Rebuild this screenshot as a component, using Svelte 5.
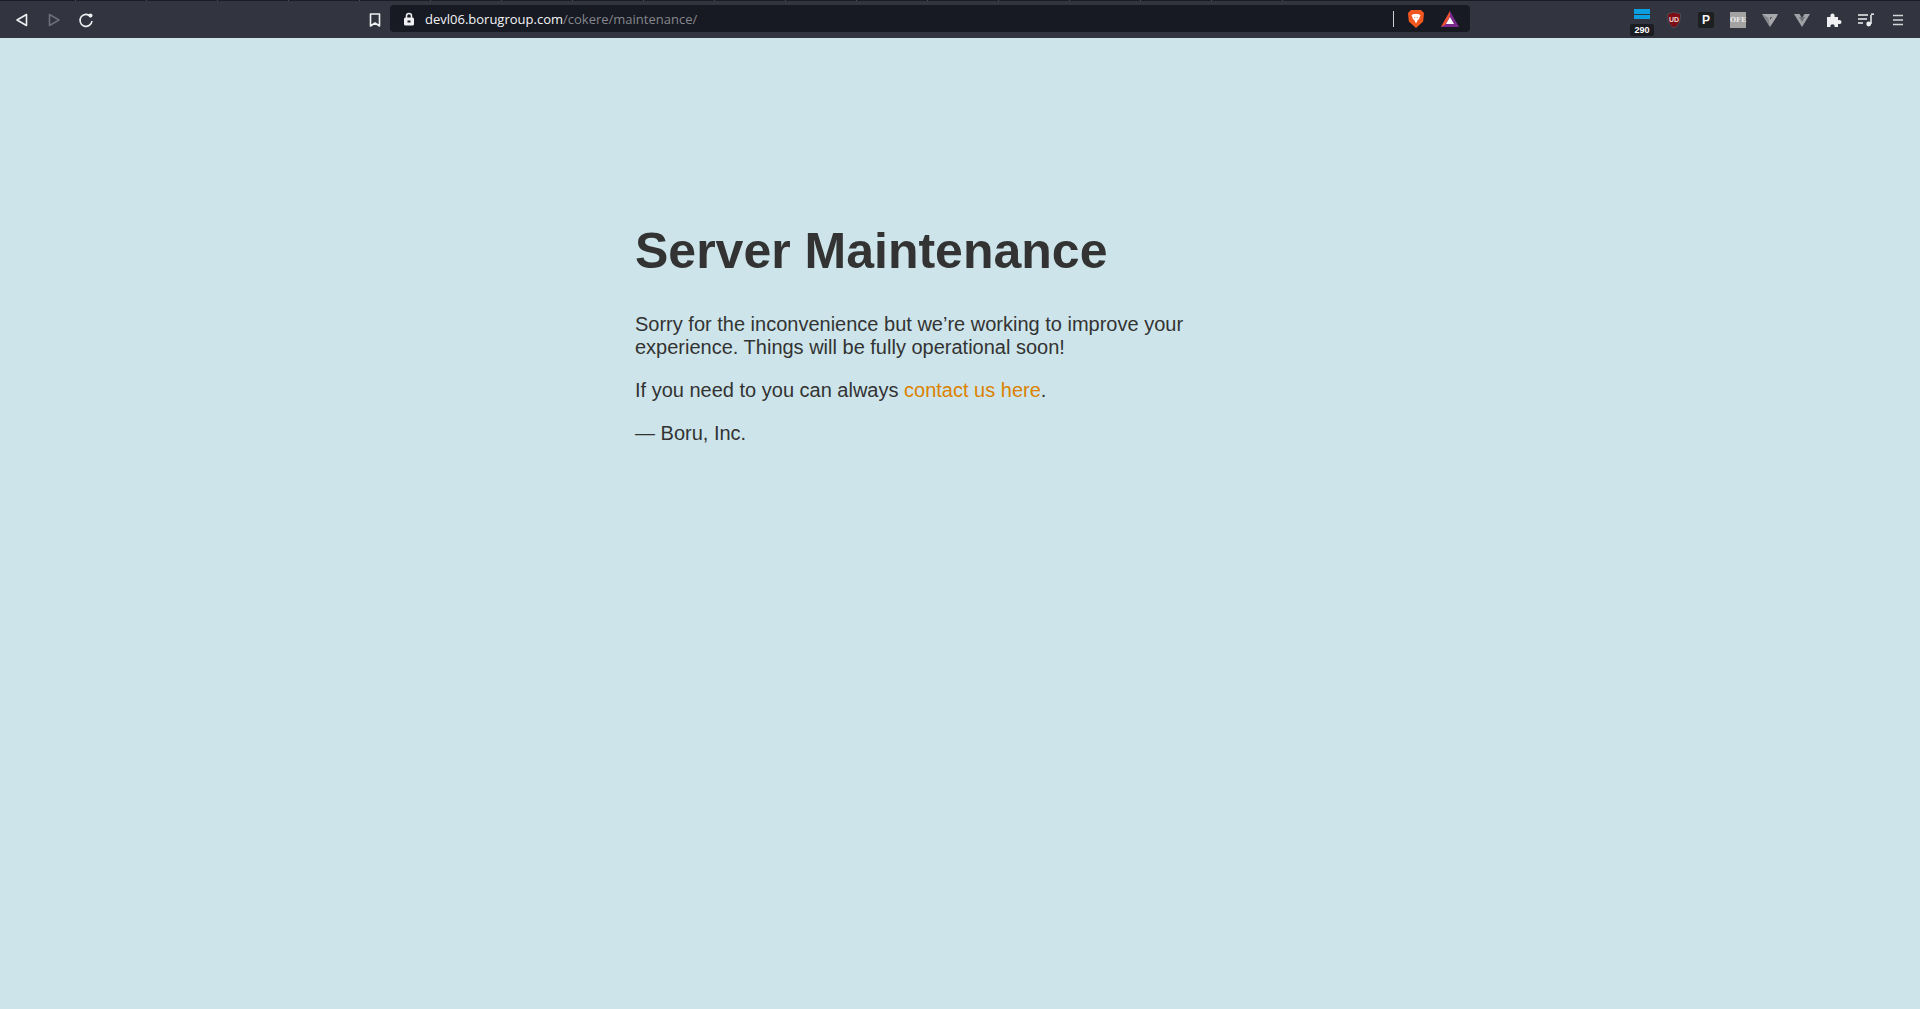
<script>
	const tabMarks = [75, 146, 217, 288, 359, 430, 501, 572, 643, 714, 785, 856, 927, 998, 1069, 1140, 1211, 1282];
</script>

<div class="page">
	<header class="toolbar">
		<div class="tab-edge">
			{#each tabMarks as mark}
				<span class="tab-mark"></span>
			{/each}
		</div>
		<div class="toolbar-row">
			<div class="nav">
				<button class="tool" aria-label="Back">
					<svg width="16" height="16" viewBox="0 0 16 16"><path d="M12.5 2.5v11L3 8z" fill="none" stroke="#f0f0f2" stroke-width="1.6" stroke-linejoin="round" /></svg>
				</button>
				<button class="tool" aria-label="Forward">
					<svg width="16" height="16" viewBox="0 0 16 16"><path d="M3.5 2.5v11L13 8z" fill="none" stroke="#6b6e78" stroke-width="1.6" stroke-linejoin="round" /></svg>
				</button>
				<button class="tool" aria-label="Reload">
					<svg width="16" height="16" viewBox="0 0 16 16"><path d="M13 5A6 6 0 1 0 14 9" fill="none" stroke="#f0f0f2" stroke-width="1.6" /><circle cx="12.5" cy="3.6" r="2" fill="#f0f0f2" /></svg>
				</button>
			</div>
			<button class="tool bookmark" aria-label="Bookmark">
				<svg width="16" height="16" viewBox="0 0 16 16"><path d="M3.5 2h9v12L8 11l-4.500 3z" fill="none" stroke="#f0f0f2" stroke-width="1.6" stroke-linejoin="round" /></svg>
			</button>
			<div class="urlbar">
				<svg class="lock" width="12" height="14" viewBox="0 0 12 14"><path d="M3.500 6V4a2.500 2.500 0 0 1 5 0v2" fill="none" stroke="#f0f0f2" stroke-width="1.500" /><rect x="1" y="5.500" width="10" height="8" rx="1.500" fill="#f0f0f2" /><rect x="4.500" y="8.500" width="3" height="2" fill="#171a22" /></svg>
				<span class="url"><span class="host">devl06.borugroup.com</span><span class="path">/cokere/maintenance/</span></span>
				<span class="divider"></span>
				<svg class="shield" width="18" height="20" viewBox="0 0 18 20">
					<path d="M4 1h10l3 3-.8 8.500L9 19 1.800 12.500 1 4z" fill="#f1571f" />
					<path d="M4.500 6 7 5h4l2.500 1-1.500 4-1.500 1.500-1.500 3-1.500-3L6 10z" fill="#fff" />
					<path d="M7 8h1.200v1.200zM11 8H9.800v1.200z" fill="#f1571f" />
				</svg>
				<svg class="bat" width="18" height="16" viewBox="0 0 18 16">
					<path d="M9 0l9 16H0z" fill="#7a2a8f" />
					<path d="M9 0L0 16l4.500-2.500L9 5z" fill="#f1512a" />
					<path d="M9 6l4 7H5z" fill="#fff" />
				</svg>
			</div>
			<div class="extensions">
				<div class="ext">
					<span class="inbox"></span>
					<span class="count">290</span>
				</div>
				<div class="ext">
					<svg width="16" height="18" viewBox="0 0 16 18"><path d="M8 1l6.500 2c.3 6-.8 10.500-6.500 14C2.300 13.500 1.200 9 1.500 3z" fill="#7d0d15" stroke="#4a4d57" /></svg>
					<span class="ud">UD</span>
				</div>
				<div class="ext"><span class="pocket">P</span></div>
				<div class="ext"><span class="ofe">OFE</span></div>
				<div class="ext">
					<svg width="16" height="14" viewBox="0 0 16 14"><path d="M0 1h16l-1.500 3H8.500L8 7l2-3h4.500L8 14z" fill="#a7a9ad" /><path d="M0 1l8 13-1.500-9L5 4z" fill="#85878c" /></svg>
				</div>
				<div class="ext">
					<svg width="16" height="14" viewBox="0 0 16 14"><path d="M0 1h5.500L8 5l2.500-4H16L8 14z" fill="#a0a2a7" /><path d="M5 4h6L8 9z" fill="#6f7278" /></svg>
				</div>
				<div class="ext">
					<svg width="16" height="16" viewBox="0 0 16 16"><path d="M1 5h3.500C4 3 5 1.500 6.500 1.500S9 3 8.500 5H12v3.200c2-.7 3.500.2 3.500 1.800s-1.500 2.500-3.500 1.800V15H8.500c.5-1.800-.5-2.800-2-2.800s-2.500 1-2 2.800H1z" fill="#f0f0f2" /></svg>
				</div>
				<div class="ext">
					<svg width="16" height="14" viewBox="0 0 16 14"><path d="M0 2h10M0 6h9M0 10h5" stroke="#f0f0f2" stroke-width="1.500" /><path d="M13 2v9" stroke="#f0f0f2" stroke-width="1.500" /><path d="M13 1.200h3" stroke="#f0f0f2" stroke-width="1.500" /><circle cx="10.700" cy="11" r="2.400" fill="#f0f0f2" /></svg>
				</div>
				<div class="ext">
					<svg width="12" height="12" viewBox="0 0 12 12"><path d="M1 1.500h10M1 6h10M1 10.500h10" stroke="#d5d6da" stroke-width="1.700" /></svg>
				</div>
			</div>
		</div>
	</header>

	<main class="content">
		<article>
			<h1>Server Maintenance</h1>
			<div>
				<p>Sorry for the inconvenience but we’re working to improve your experience. Things will be fully operational soon!</p>
				<p>If you need to you can always <a href="#contact">contact us here</a>.</p>
				<p>— Boru, Inc.</p>
			</div>
		</article>
	</main>
</div>

<style>
	:global(body) {
		background: #cde5ea;
	}
	.page {
		min-height: 1009px;
		display: flex;
		flex-direction: column;
	}
	.toolbar {
		height: 38px;
		background: #32353f;
		flex-shrink: 0;
	}
	.tab-edge {
		height: 1px;
		background: #1a1c23;
		display: flex;
		gap: 70px;
		padding-left: 75px;
	}
	.tab-mark {
		width: 1px;
		height: 1px;
		background: #4a4d57;
	}
	.toolbar-row {
		height: 37px;
		display: flex;
		align-items: center;
	}
	.nav {
		display: flex;
		gap: 0;
		padding-left: 6px;
		width: 354px;
	}
	.tool {
		width: 32px;
		height: 32px;
		background: none;
		border: 0;
		padding: 0;
		display: flex;
		align-items: center;
		justify-content: center;
	}
	.bookmark {
		width: 30px;
	}
	.urlbar {
		width: 1080px;
		height: 27px;
		margin-top: -2px;
		background: #171a22;
		border-radius: 4px;
		display: flex;
		align-items: center;
		padding: 0 10px 0 13px;
		box-sizing: border-box;
		flex-shrink: 0;
	}
	.lock {
		margin-right: 10px;
	}
	.url {
		font-family: "Open Sans", "Noto Sans", sans-serif;
		font-size: 13px;
		flex: 1;
	}
	.host {
		color: #f4f4f6;
	}
	.path {
		color: #85878d;
	}
	.divider {
		width: 1px;
		height: 16px;
		background: #d0d0d4;
		margin-right: 13px;
	}
	.shield {
		margin-right: 16px;
	}
	.bat {
		margin-right: 1px;
	}
	.extensions {
		margin-left: auto;
		display: flex;
		padding-right: 6px;
	}
	.ext {
		width: 32px;
		height: 32px;
		display: flex;
		align-items: center;
		justify-content: center;
		position: relative;
	}
	.inbox {
		width: 16px;
		height: 10px;
		margin-top: -12px;
		background: linear-gradient(#0a9fe0 50%, #32353f 50%, #32353f 60%, #0a9fe0 60%);
	}
	.count {
		position: absolute;
		left: 4px;
		top: 20px;
		width: 24px;
		height: 12px;
		background: #1c1d22;
		border-radius: 2px;
		color: #fff;
		font: bold 9px/12px "Liberation Sans", sans-serif;
		text-align: center;
	}
	.ud {
		position: absolute;
		left: 11px;
		top: 11px;
		color: #f0d5d5;
		font: bold 7px/9px "Liberation Sans", sans-serif;
	}
	.pocket {
		width: 16px;
		height: 16px;
		background: #1e1f21;
		border-radius: 2px;
		color: #f4f4f4;
		font: bold 12px/16px "Liberation Sans", sans-serif;
		text-align: center;
	}
	.ofe {
		width: 16px;
		height: 16px;
		background: #a3a3a3;
		color: #e8e8e8;
		font: bold 7px/16px "DejaVu Serif", serif;
		text-align: center;
	}
	.content {
		flex: 1;
		padding: 150px;
		text-align: center;
		font: 20px "Liberation Sans", Helvetica, sans-serif;
		color: #333;
	}
	article {
		display: block;
		text-align: left;
		width: 650px;
		margin: 0 auto;
	}
	h1 {
		font-size: 50px;
		margin: 33.500px 0;
	}
	p {
		margin: 20px 0;
	}
	a {
		color: #dc8100;
		text-decoration: none;
	}
</style>
